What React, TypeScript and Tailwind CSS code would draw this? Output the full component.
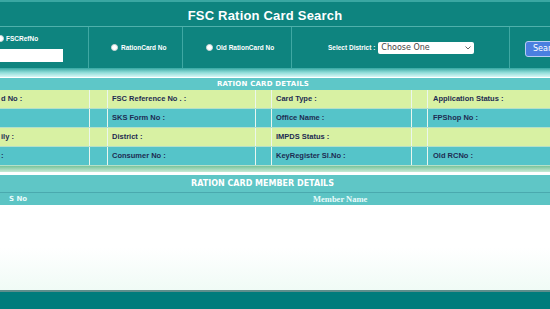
import React from "react";

const detailRows = [
  { bg: "bg-[#d8f1a3]", cells: ["d No :", "FSC Reference No . :", "Card Type :", "Application Status :"] },
  { bg: "bg-[#55c4c9]", cells: ["", "SKS Form No :", "Office Name :", "FPShop No :"] },
  { bg: "bg-[#d8f1a3]", cells: ["ily :", "District :", "IMPDS Status :", ""] },
  { bg: "bg-[#55c4c9]", cells: [":", "Consumer No :", "KeyRegister Sl.No :", "Old RCNo :"] },
];

function Radio() {
  return <span className="inline-block w-[7px] h-[7px] rounded-full bg-white border border-[#cfd8d8] shrink-0" />;
}

export default function App() {
  return (
    <div className="w-[550px] h-[309px] overflow-hidden bg-white flex flex-col font-['Liberation_Sans',Arial,sans-serif]">
      {/* title */}
      <div className="h-[2px] bg-[#3aa7a2]" />
      <div className="h-[25px] bg-[#0e847f] flex items-center justify-center border-b border-[#4fb0ab]">
        <span className="text-white font-bold text-[13px] tracking-[0.2px] ml-[-20px] mt-[3px]">FSC Ration Card Search</span>
      </div>

      {/* search row */}
      <div className="h-[41px] bg-[#0e847f] grid grid-cols-[89px_94px_109px_218px_1fr] text-white">
        <div className="border-r border-[#3fa8a3] pt-[7px]">
          <div className="flex items-center gap-[2px] ml-[-3px]">
            <Radio />
            <span className="text-[6.5px] font-bold">FSCRefNo</span>
          </div>
          <div className="mt-[5px] w-[63px] h-[13px] bg-white" />
        </div>
        <div className="border-r border-[#3fa8a3] flex items-center pl-[22px] gap-[3px]">
          <Radio />
          <span className="text-[6.5px] font-bold">RationCard No</span>
        </div>
        <div className="border-r border-[#3fa8a3] flex items-center pl-[23px] gap-[3px]">
          <Radio />
          <span className="text-[6.5px] font-bold">Old RationCard No</span>
        </div>
        <div className="border-r border-[#3fa8a3] flex items-center pl-[36px] gap-[3px]">
          <span className="text-[6.5px] font-bold">Select District :</span>
          <div className="w-[96px] h-[12px] bg-white rounded-[2px] flex items-center justify-between px-[3px] text-[#444] text-[8px] font-['DejaVu_Sans',sans-serif]">
            <span>Choose One</span>
            <svg width="6" height="4" viewBox="0 0 6 4"><path d="M0.5 0.5 L3 3 L5.5 0.5" stroke="#666" fill="none" strokeWidth="1" /></svg>
          </div>
        </div>
        <div className="flex items-center pl-[15px]">
          <div className="h-[16px] w-[40px] rounded-[3px] bg-[#4a7fe0] border border-[#b8cef2] flex items-center pl-[7px] text-[8px] font-['DejaVu_Sans',sans-serif] mt-[2px]">Search</div>
        </div>
      </div>

      {/* band */}
      <div className="h-[9px] bg-gradient-to-b from-[#31a8a3] via-[#8edcd8] to-[#d6f7f6]" />
      <div className="h-[1px] bg-white" />

      {/* details */}
      <div className="h-[12px] bg-[#5ec7c8] flex items-center justify-center">
        <span className="text-white font-bold text-[7px] font-['DejaVu_Sans',sans-serif] tracking-[0.2px] ml-[-24px]">RATION CARD DETAILS</span>
      </div>
      {detailRows.map((r, i) => (
        <div key={i} className={`h-[19px] ${r.bg} grid grid-cols-[90px_18px_148px_16px_140px_16px_1fr] text-[7.5px] font-bold text-[#1d2b52] border-b border-[#b5e0c8]`}>
          <div className="border-r border-[#eaf6ee] flex items-center pl-[1px]">{r.cells[0]}</div>
          <div className="border-r border-[#eaf6ee]" />
          <div className="border-r border-[#eaf6ee] flex items-center pl-[4px]">{r.cells[1]}</div>
          <div className="border-r border-[#eaf6ee]" />
          <div className="border-r border-[#eaf6ee] flex items-center pl-[4px]">{r.cells[2]}</div>
          <div className="border-r border-[#eaf6ee]" />
          <div className="flex items-center pl-[5px]">{r.cells[3]}</div>
        </div>
      ))}
      <div className="h-[6px] bg-gradient-to-b from-[#79c39b] to-[#c6ead6]" />
      <div className="h-[3px] bg-white" />

      {/* member details */}
      <div className="h-[18px] bg-[#5fc6c6] flex items-center justify-center border-b border-[#4aa9ae]">
        <span className="text-white font-bold text-[8px] font-['DejaVu_Sans',sans-serif] ml-[-25px]">RATION CARD MEMBER DETAILS</span>
      </div>
      <div className="h-[12px] bg-[#5cc4c4] flex items-center text-[#e8fbfb] font-bold">
        <span className="pl-[9px] text-[7px] font-['DejaVu_Sans',sans-serif] w-[313px]">S No</span>
        <span className="text-[8.5px] font-['Liberation_Serif',serif]">Member Name</span>
      </div>

      <div className="flex-1 bg-gradient-to-b from-white via-white to-[#f0fbf6]" />
      <div className="h-[2px] bg-[#5e8e8c]" />
      <div className="h-[17px] bg-[#007c7c]" />
    </div>
  );
}
